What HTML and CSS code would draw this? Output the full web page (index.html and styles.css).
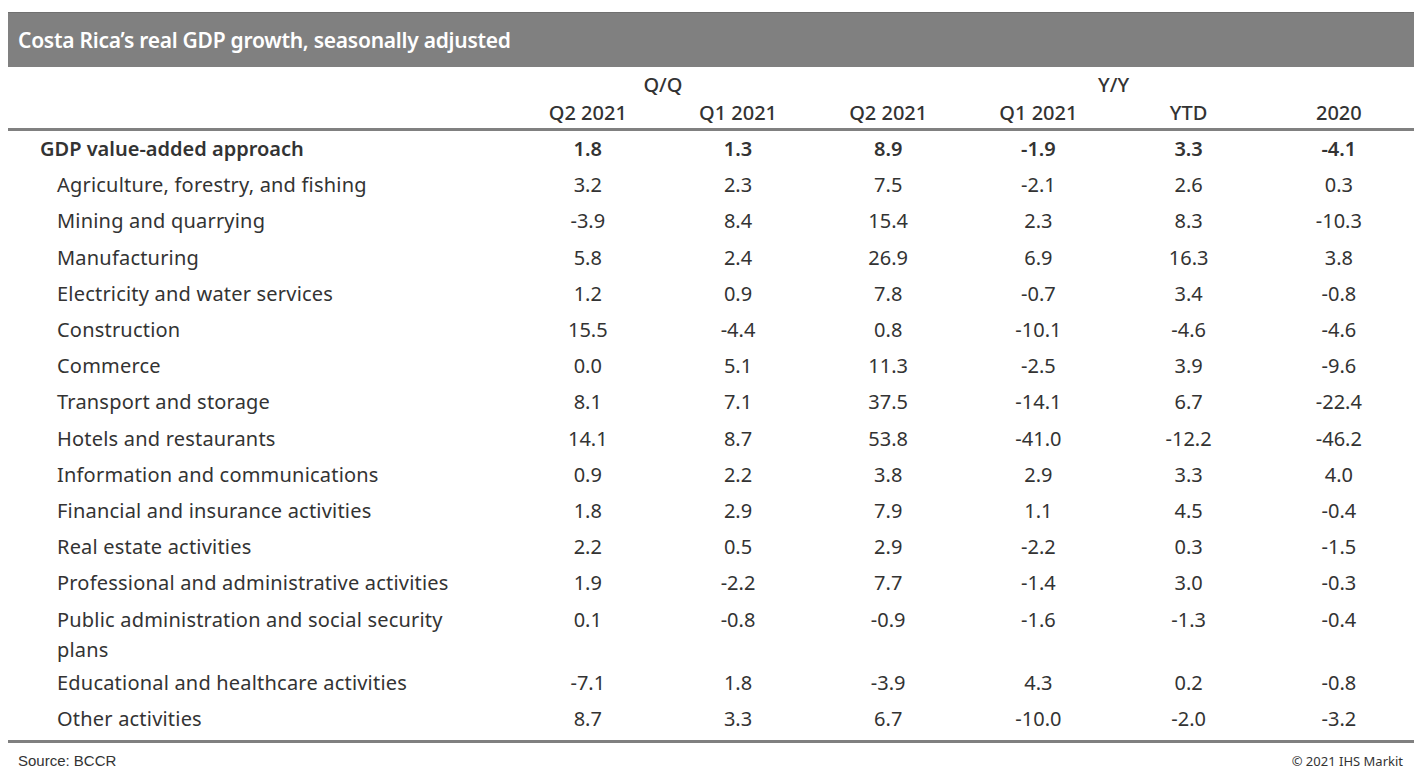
FILE: index.html
```html
<!DOCTYPE html>
<html lang="en">
<head>
<meta charset="utf-8">
<title>Costa Rica's real GDP growth</title>
<link rel="stylesheet" href="styles.css">
</head>
<body>
<div class="page">
  <div class="titlebar">Costa Rica’s real GDP growth, seasonally adjusted</div>
  <table class="gdp">
    <colgroup>
      <col class="c-label">
      <col class="c-val"><col class="c-val"><col class="c-val"><col class="c-val"><col class="c-val"><col class="c-val">
    </colgroup>
    <thead>
      <tr class="h1">
        <th></th>
        <th colspan="2">Q/Q</th>
        <th colspan="4">Y/Y</th>
      </tr>
      <tr class="h2">
        <th></th>
        <th>Q2 2021</th><th>Q1 2021</th><th>Q2 2021</th><th>Q1 2021</th><th>YTD</th><th>2020</th>
      </tr>
    </thead>
    <tbody>
      <tr class="total"><td class="lbl">GDP value-added approach</td><td>1.8</td><td>1.3</td><td>8.9</td><td>-1.9</td><td>3.3</td><td>-4.1</td></tr>
      <tr><td class="lbl sub">Agriculture, forestry, and fishing</td><td>3.2</td><td>2.3</td><td>7.5</td><td>-2.1</td><td>2.6</td><td>0.3</td></tr>
      <tr><td class="lbl sub">Mining and quarrying</td><td>-3.9</td><td>8.4</td><td>15.4</td><td>2.3</td><td>8.3</td><td>-10.3</td></tr>
      <tr><td class="lbl sub">Manufacturing</td><td>5.8</td><td>2.4</td><td>26.9</td><td>6.9</td><td>16.3</td><td>3.8</td></tr>
      <tr><td class="lbl sub">Electricity and water services</td><td>1.2</td><td>0.9</td><td>7.8</td><td>-0.7</td><td>3.4</td><td>-0.8</td></tr>
      <tr><td class="lbl sub">Construction</td><td>15.5</td><td>-4.4</td><td>0.8</td><td>-10.1</td><td>-4.6</td><td>-4.6</td></tr>
      <tr><td class="lbl sub">Commerce</td><td>0.0</td><td>5.1</td><td>11.3</td><td>-2.5</td><td>3.9</td><td>-9.6</td></tr>
      <tr><td class="lbl sub">Transport and storage</td><td>8.1</td><td>7.1</td><td>37.5</td><td>-14.1</td><td>6.7</td><td>-22.4</td></tr>
      <tr><td class="lbl sub">Hotels and restaurants</td><td>14.1</td><td>8.7</td><td>53.8</td><td>-41.0</td><td>-12.2</td><td>-46.2</td></tr>
      <tr><td class="lbl sub">Information and communications</td><td>0.9</td><td>2.2</td><td>3.8</td><td>2.9</td><td>3.3</td><td>4.0</td></tr>
      <tr><td class="lbl sub">Financial and insurance activities</td><td>1.8</td><td>2.9</td><td>7.9</td><td>1.1</td><td>4.5</td><td>-0.4</td></tr>
      <tr><td class="lbl sub">Real estate activities</td><td>2.2</td><td>0.5</td><td>2.9</td><td>-2.2</td><td>0.3</td><td>-1.5</td></tr>
      <tr><td class="lbl sub">Professional and administrative activities</td><td>1.9</td><td>-2.2</td><td>7.7</td><td>-1.4</td><td>3.0</td><td>-0.3</td></tr>
      <tr class="wrap"><td class="lbl sub">Public administration and social security plans</td><td>0.1</td><td>-0.8</td><td>-0.9</td><td>-1.6</td><td>-1.3</td><td>-0.4</td></tr>
      <tr><td class="lbl sub">Educational and healthcare activities</td><td>-7.1</td><td>1.8</td><td>-3.9</td><td>4.3</td><td>0.2</td><td>-0.8</td></tr>
      <tr class="last"><td class="lbl sub">Other activities</td><td>8.7</td><td>3.3</td><td>6.7</td><td>-10.0</td><td>-2.0</td><td>-3.2</td></tr>
    </tbody>
  </table>
  <div class="footer">
    <span class="source">Source: BCCR</span>
    <span class="copy">© 2021 IHS Markit</span>
  </div>
</div>
</body>
</html>
```

FILE: styles.css
```css
html, body {
  margin: 0;
  padding: 0;
  background: #ffffff;
}

.page {
  width: 1406px;
  margin-left: 8px;
  padding-top: 12px;
  font-family: "Noto Sans", "Open Sans", sans-serif;
  color: #333333;
}

.titlebar {
  height: 55px;
  box-sizing: border-box;
  background: #808080;
  border-top: 1px solid #707070;
  color: #ffffff;
  font-weight: 600;
  font-size: 21px;
  letter-spacing: -0.25px;
  padding-left: 10px;
  padding-bottom: 1px;
  display: flex;
  align-items: center;
}

.gdp {
  width: 1406px;
  border-collapse: collapse;
  table-layout: fixed;
  font-size: 20px;
}

.c-label { width: 504px; }
.c-val { width: 150px; }

.gdp th {
  font-weight: 500;
  text-align: center;
  line-height: 26px;
}

.gdp .h1 th {
  padding: 5px 0 2px;
}

.gdp .h2 th {
  padding: 0 0 2px;
  border-bottom: 3px solid #808080;
}

.gdp td {
  text-align: center;
  line-height: 30px;
  padding: 3.1px 0;
  vertical-align: top;
}

.gdp td.lbl {
  text-align: left;
  letter-spacing: 0.2px;
  padding-left: 32px;
  padding-right: 42px;
}

.gdp td.lbl.sub {
  padding-left: 49px;
}

.gdp tr.total td {
  font-weight: 600;
  letter-spacing: 0;
}

.gdp tr.wrap td.lbl {
  padding-bottom: 0;
}

.gdp tr.last td {
  border-bottom: 3px solid #808080;
  padding-bottom: 6px;
}

.footer {
  display: flex;
  justify-content: space-between;
  align-items: center;
  padding: 9px 11px 0 10px;
}

.source {
  font-family: "Liberation Sans", Arial, sans-serif;
  font-size: 15px;
  color: #333333;
}

.copy {
  font-family: "Noto Sans", sans-serif;
  font-size: 13px;
  color: #333333;
}
```
